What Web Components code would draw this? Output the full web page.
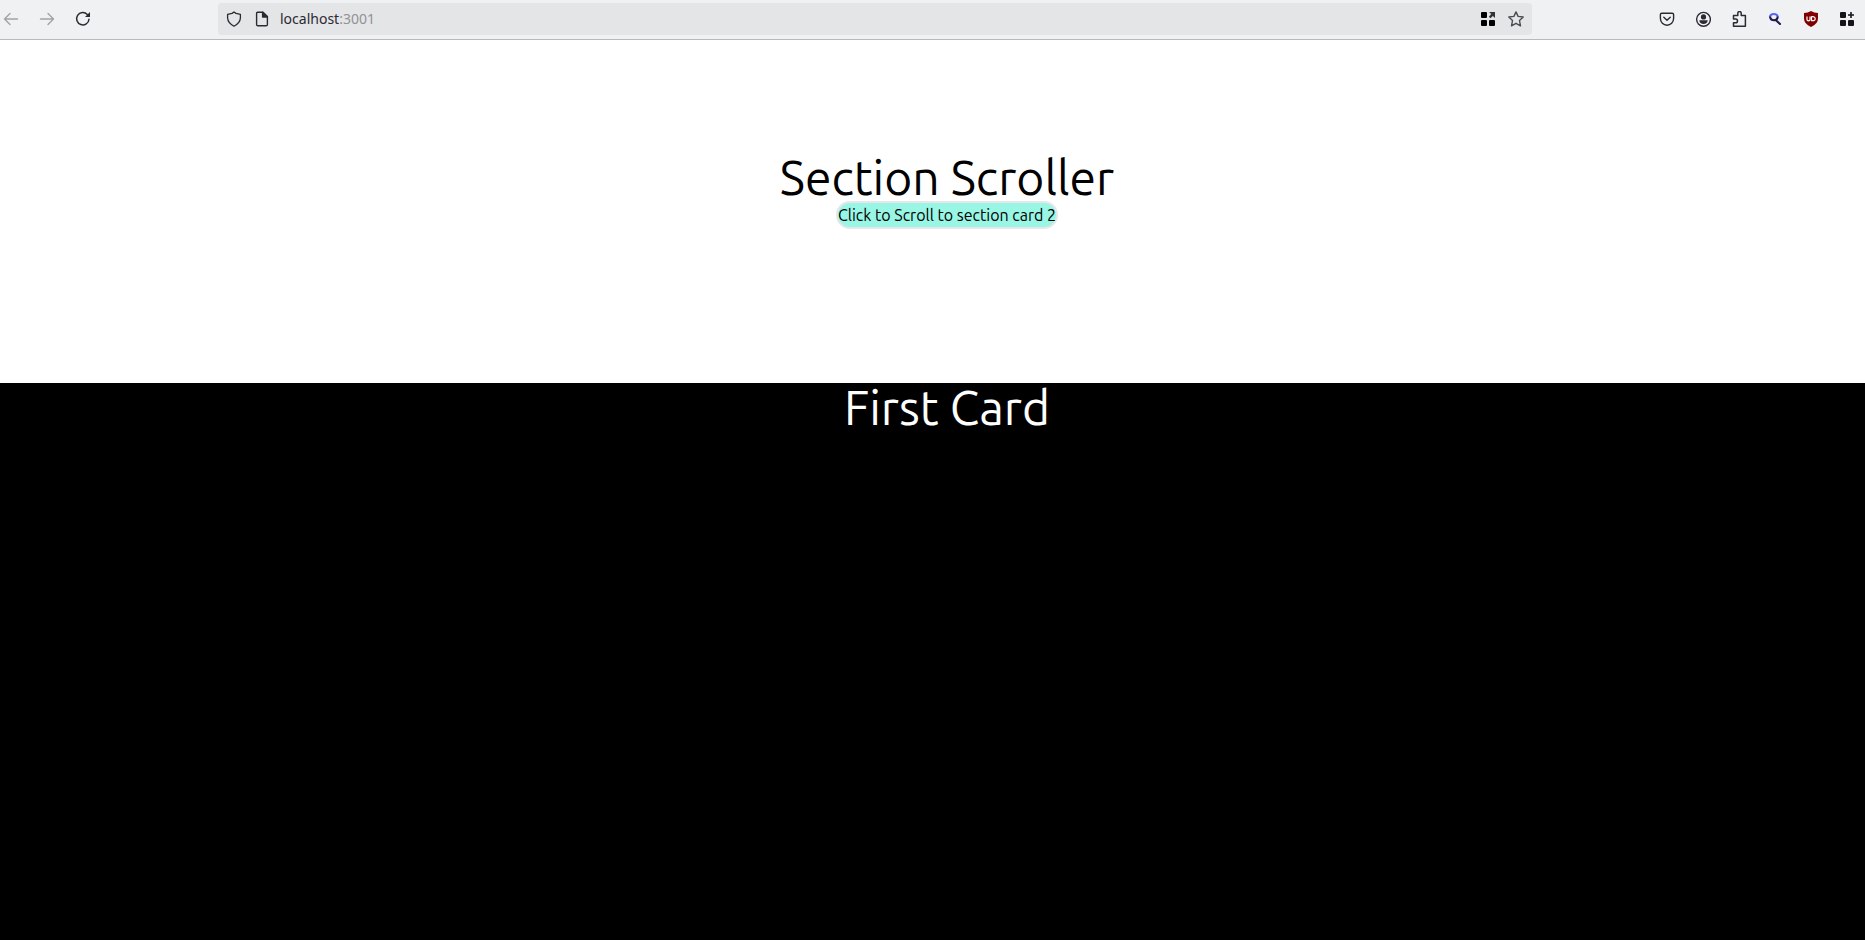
<!DOCTYPE html>
<html lang="en">
<head>
<meta charset="utf-8">
<title>Section Scroller</title>
<style>
html, body { margin: 0; height: 100%; }
body { font-family: Ubuntu, "Noto Sans", sans-serif; background: #fff; color: #000; }
</style>
</head>
<body>
<scroller-app></scroller-app>
<script>
const define = (name, html) => customElements.define(name, class extends HTMLElement {
  constructor() {
    super();
    this.attachShadow({ mode: "open" }).innerHTML = html;
  }
  connectedCallback() {
    const label = this.getAttribute("label");
    if (label) this.shadowRoot.querySelector("button").setAttribute("aria-label", label);
  }
});

define("tool-button", `
<style>
:host { display: block; width: 16px; height: 16px; color: #2b2a33; }
:host([dim]) { color: #a3a3a6; }
button { display: block; width: 16px; height: 16px; padding: 0; border: 0; background: none; color: inherit; }
</style>
<button type="button"><slot></slot></button>`);

define("address-bar", `
<style>
:host { display: flex; align-items: center; gap: 12px; box-sizing: border-box; height: 32px; padding: 0 8px; border-radius: 4px; background: #e4e5e7; }
a { flex: 1; margin-left: -2px; font: 14px/20px "Noto Sans", sans-serif; color: #2b2a33; text-decoration: none; }
span { color: #929295; }
svg { display: block; width: 16px; height: 16px; }
</style>
<tool-button label="Tracking protection"><svg viewBox="0 0 16 16" fill="none" stroke="currentColor" stroke-width="1.3" stroke-linejoin="round"><path d="M8 1 10 2.4 14.4 3.4V7C14.2 10.8 11.4 13.4 8 15.2 4.6 13.4 1.8 10.8 1.6 7V3.4L6 2.4Z"/></svg></tool-button>
<tool-button label="Site information"><svg viewBox="0 0 16 16" fill="none" stroke="currentColor" stroke-width="1.4" stroke-linejoin="round"><path d="M3.6 1.2H9L13.4 5.6V13.4Q13.4 14.7 12.1 14.7H3.9Q2.6 14.7 2.6 13.4V2.2Q2.6 1.2 3.6 1.2Z"/><path d="M8.6 1.2V6H13.4Z" fill="currentColor"/></svg></tool-button>
<a href="#">localhost<span>:3001</span></a>
<tool-button label="Open in app"><svg viewBox="0 0 16 16" fill="#000"><rect x="1" y="1" width="6" height="6" rx="1"/><rect x="1" y="9" width="6" height="6" rx="1"/><rect x="9" y="9" width="6" height="6" rx="1"/><path d="M9 1H15V7L12.9 4.9 10.4 7.2 8.9 5.7 11.2 3.1Z" fill="#333"/></svg></tool-button>
<tool-button label="Bookmark"><svg viewBox="0 0 16 16" fill="none" stroke="#4c4b52" stroke-width="1.4" stroke-linejoin="round"><path d="M8 .9 10.1 5.4 15.2 6 11.5 9.6 12.5 14.8 8 12.3 3.5 14.8 4.5 9.6 .8 6 5.9 5.4Z"/></svg></tool-button>`);

define("browser-bar", `
<style>
:host { display: flex; align-items: center; justify-content: space-between; box-sizing: border-box; height: 40px; padding: 0 10px 1px 3px; background: #f0f1f3; border-bottom: 1px solid #b9b9bb; }
nav, .tools { display: flex; gap: 20px; align-items: center; }
nav { width: 215px; flex: none; }
address-bar { flex: 0 1 1314px; margin-right: auto; }
svg { display: block; width: 16px; height: 16px; }
</style>
<nav aria-label="History">
<tool-button dim label="Back"><svg viewBox="0 0 16 16" fill="none" stroke="currentColor" stroke-width="1.4" stroke-linecap="round" stroke-linejoin="round"><path d="M14.5 8H1.5M7 2.5 1.5 8 7 13.5"/></svg></tool-button>
<tool-button dim label="Forward"><svg viewBox="0 0 16 16" fill="none" stroke="currentColor" stroke-width="1.4" stroke-linecap="round" stroke-linejoin="round"><path d="M1.5 8H14.5M9 2.5 14.5 8 9 13.5"/></svg></tool-button>
<tool-button label="Reload"><svg viewBox="0 0 16 16" fill="none" stroke="currentColor" stroke-width="1.5" stroke-linecap="round"><path d="M12.3 3.4A6.2 6.2 0 1 0 14 8.2"/><path d="M15 1V6H10Z" fill="currentColor" stroke="none"/></svg></tool-button>
</nav>
<address-bar></address-bar>
<div class="tools">
<tool-button label="Save to Pocket"><svg viewBox="0 0 16 16" fill="none" stroke="currentColor" stroke-width="1.4" stroke-linecap="round" stroke-linejoin="round"><path d="M2.8 2.2H13.2Q14.6 2.2 14.6 3.6V7.6A6.6 6.6 0 0 1 1.4 7.6V3.6Q1.4 2.2 2.8 2.2ZM4.8 6.2 8 9.2 11.2 6.2"/></svg></tool-button>
<tool-button label="Account"><svg viewBox="0 0 16 16" fill="currentColor"><circle cx="8.5" cy="8.3" r="6.9" fill="none" stroke="currentColor" stroke-width="1.4"/><circle cx="8.5" cy="5.9" r="2.6"/><path d="M4.3 9.3H12.7Q12.3 13.1 8.5 13.1 4.7 13.1 4.3 9.3Z"/></svg></tool-button>
<tool-button label="Extensions"><svg viewBox="0 0 16 16" fill="none" stroke="currentColor" stroke-width="1.5" stroke-linejoin="round"><path d="M2.5 4.5H6.8V2.3A1.7 1.7 0 0 1 10.2 2.3V4.5H14.4V15.2H2.5V11.7H4.7A1.8 1.8 0 0 0 4.7 8.1H2.5Z"/></svg></tool-button>
<tool-button label="Search"><svg viewBox="0 0 16 16" fill="none"><path d="M1 1H15V15H1Z" fill="#f0f0ff"/><path d="M2.8 6.2A4.1 3.8 0 0 1 10.9 6.2" stroke="#5865f2" stroke-width="2.1"/><path d="M3.2 6.6Q3.8 9.3 7 9.3 9.8 9.3 10.6 6.6M9 9.2 13 13" stroke="#20203c" stroke-width="2.1" stroke-linecap="round"/></svg></tool-button>
<tool-button label="Content blocker"><svg viewBox="0 0 16 16"><path d="M8 0Q11 2 15 2V7.5Q15 13 8 16 1 13 1 7.5V2Q5 2 8 0Z" fill="#800000"/><path d="M4 5.5V8.4Q4 9.8 5.5 9.8 7 9.8 7 8.4V5.5M8.5 5.8V9.6Q12.2 10.2 12.2 7.7 12.2 5.2 8.5 5.8Z" fill="none" stroke="#fff" stroke-width="1.2"/></svg></tool-button>
<tool-button label="Add-ons"><svg viewBox="0 0 16 16" fill="#15141a"><rect x="1" y="1" width="6" height="6" rx="1"/><rect x="1" y="9" width="6" height="6" rx="1"/><rect x="9" y="9" width="6" height="6" rx="1"/><path d="M11.2 1H12.8V3.2H15V4.8H12.8V7H11.2V4.8H9V3.2H11.2Z"/></svg></tool-button>
</div>`);

define("scroll-button", `
<style>
:host { display: block; }
button { display: block; border: 2px solid #e5e7eb; border-radius: 14px; padding: 0; background: #99f6e4; color: #000; font: 16px/24px Ubuntu, "Noto Sans", sans-serif; }
</style>
<button type="button"><slot></slot></button>`);

define("page-section", `
<style>
:host { display: flex; flex-direction: column; align-items: center; box-sizing: border-box; padding-left: 29px; }
h1 { margin: 0; font-size: 48px; line-height: 48px; font-weight: 400; }
</style>
<h1><slot name="title"></slot></h1>
<slot></slot>`);

define("scroller-app", `
<style>
:host { display: flex; flex-direction: column; min-height: 100vh; }
.intro { padding-top: 113px; padding-bottom: 154px; }
.first { flex: 1; background: #000; color: #fff; }
</style>
<browser-bar></browser-bar>
<page-section class="intro"><span slot="title">Section Scroller</span><scroll-button>Click to Scroll to section card 2</scroll-button></page-section>
<page-section class="first"><span slot="title">First Card</span></page-section>`);
</script>
</body>
</html>
